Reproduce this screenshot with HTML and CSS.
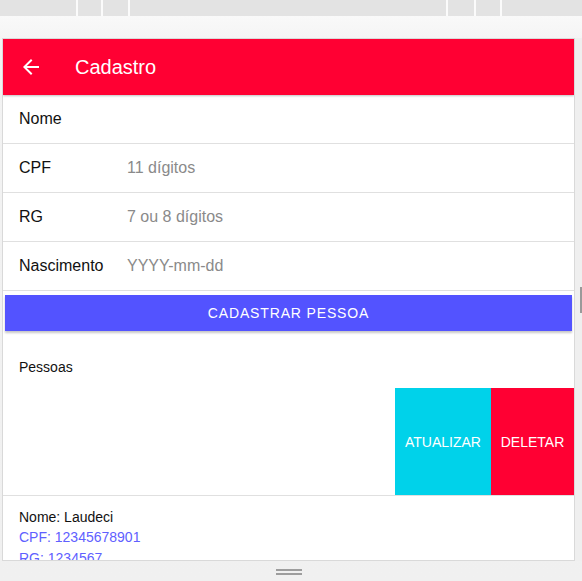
FILE: index.html
```html
<!DOCTYPE html>
<html lang="pt">
<head>
<meta charset="utf-8">
<title>Cadastro</title>
<link rel="stylesheet" href="styles.css">
</head>
<body>
<div class="topbar">
  <div class="seg s1"></div>
  <div class="seg s2"></div>
  <div class="seg s3"></div>
  <div class="seg s4"></div>
  <div class="seg s5"></div>
  <div class="seg s6"></div>
  <div class="seg s7"></div>
</div>
<div class="stage">
  <div class="device">
    <div class="card">
      <header class="appbar">
        <svg class="back" viewBox="0 0 24 24" width="24" height="24"><path fill="#fff" d="M20 11H7.83l5.59-5.59L12 4l-8 8 8 8 1.41-1.41L7.83 13H20v-2z"/></svg>
        <span class="title">Cadastro</span>
      </header>
      <div class="row"><span class="label">Nome</span><span class="ph"></span></div>
      <div class="row"><span class="label">CPF</span><span class="ph">11 dígitos</span></div>
      <div class="row"><span class="label">RG</span><span class="ph">7 ou 8 dígitos</span></div>
      <div class="row"><span class="label">Nascimento</span><span class="ph">YYYY-mm-dd</span></div>
      <div class="btn-wrap"><div class="submit">CADASTRAR PESSOA</div></div>
      <div class="section-title">Pessoas</div>
      <div class="item">
        <div class="actions">
          <div class="act update">ATUALIZAR</div>
          <div class="act delete">DELETAR</div>
        </div>
      </div>
      <div class="person">
        <div class="pname">Nome: Laudeci</div>
        <div class="pinfo">CPF: 12345678901</div>
        <div class="pinfo">RG: 1234567</div>
      </div>
    </div>
    <div class="side"><div class="thumb"></div></div>
  </div>
  <div class="handle"><span></span><span></span></div>
</div>
</body>
</html>
```

FILE: styles.css
```css
* { box-sizing: border-box; }
html, body { margin: 0; padding: 0; }
body {
  width: 582px;
  height: 581px;
  overflow: hidden;
  font-family: "Liberation Sans", Arial, sans-serif;
  background: #eeeeee;
}
.topbar {
  height: 16px;
  display: flex;
  gap: 2px;
  background: #fbfbfb;
}
.seg { background: #e3e3e3; height: 16px; }
.s1 { width: 76px; }
.s2 { width: 23px; }
.s3 { width: 25px; }
.s4 { width: 316px; }
.s5 { width: 26px; }
.s6 { width: 24px; }
.s7 { flex: 1; }

.stage {
  height: 565px;
  background: linear-gradient(#f9f9f9 0, #f3f3f3 30px, #f0f0f0 100%);
  padding-top: 22px;
}
.device {
  display: flex;
  height: 523px;
  padding-left: 2px;
  position: relative;
}
.card {
  width: 573px;
  height: 523px;
  background: #fff;
  border: 1px solid #d9d9d9;
  overflow: hidden;
}
.side {
  flex: 1;
  background: #efefef;
  position: relative;
}
.thumb {
  position: absolute;
  left: 5px;
  top: 249px;
  width: 2px;
  height: 26px;
  background: #9a9a9a;
}
.appbar {
  height: 56px;
  background: #ff0033;
  display: flex;
  align-items: center;
  padding-left: 16px;
  box-shadow: 0 1px 2px rgba(0,0,0,0.25);
  position: relative;
}
.back { display: block; }
.title {
  color: #fff;
  font-size: 20px;
  margin-left: 32px;
}
.row {
  height: 49px;
  border-bottom: 1px solid #e0e0e0;
  display: flex;
  align-items: center;
  padding-left: 16px;
  font-size: 16px;
}
.label { width: 108px; color: #111; }
.ph { color: #8a8a8a; }
.btn-wrap { padding: 4px 2px 0; }
.submit {
  height: 36px;
  background: #5353ff;
  color: #fff;
  display: flex;
  align-items: center;
  justify-content: center;
  font-size: 14px;
  letter-spacing: 0.85px;
  box-shadow: 0 2px 2px rgba(0,0,0,0.22);
}
.section-title {
  height: 57px;
  padding: 26px 16px 0;
  line-height: 20px;
  font-size: 14px;
  color: #111;
}
.item {
  height: 108px;
  border-bottom: 1px solid #e0e0e0;
  display: flex;
  justify-content: flex-end;
}
.actions { display: flex; }
.act {
  display: flex;
  align-items: center;
  justify-content: center;
  color: #fff;
  font-size: 14px;
  padding: 0 8px;
}
.update { background: #00d2ea; width: 96px; }
.delete { background: #ff0033; width: 83px; }
.person {
  padding: 11px 16px 0;
  font-size: 14px;
  line-height: 20px;
}
.pname { color: #111; }
.pinfo { color: #6060ff; }
.pinfo + .pinfo { margin-top: 1px; }
.handle {
  display: flex;
  flex-direction: column;
  align-items: center;
  gap: 2px;
  padding-top: 8px;
  padding-right: 4px;
}
.handle span {
  display: block;
  width: 26px;
  height: 2px;
  background: #9d9d9d;
}
```
